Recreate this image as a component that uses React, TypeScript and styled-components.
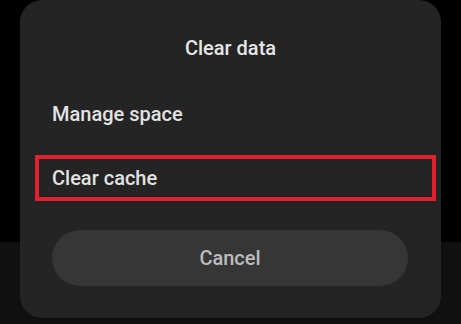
import React from "react";
import styled, { createGlobalStyle } from "styled-components";

const Global = createGlobalStyle`
  html, body { margin: 0; padding: 0; background: #000; }
  body { font-family: Roboto, "Noto Sans", "Liberation Sans", sans-serif; }
  * { box-sizing: border-box; }
`;

const Screen = styled.div`
  width: 461px;
  height: 324px;
  background: linear-gradient(to bottom, #000 0, #000 242px, #101010 242px, #101010 100%);
  padding-left: 20px;
  overflow: hidden;
`;

const Dialog = styled.div`
  width: 421px;
  height: 318px;
  background: #242424;
  border-radius: 22px;
  padding: 36px 32px 32px;
  display: flex;
  flex-direction: column;
`;

const Title = styled.div`
  font-size: 20px;
  line-height: 24px;
  font-weight: 500;
  color: #e6e6e6;
  text-align: center;
  margin-bottom: 31px;
`;

const Options = styled.div`
  display: flex;
  flex-direction: column;
  gap: 18px;
`;

const Option = styled.div<{ $highlight?: boolean }>`
  height: 46px;
  display: flex;
  align-items: center;
  font-size: 20px;
  line-height: 24px;
  font-weight: 500;
  color: #e2e2e2;
  ${(p) =>
    p.$highlight
      ? `
    border: 4px solid #e3202b;
    margin: 0 -27px 0 -17px;
    padding-left: 13px;
  `
      : ``}
`;

const CancelButton = styled.div`
  margin-top: 29px;
  height: 56px;
  width: 356px;
  border-radius: 28px;
  background: #363636;
  display: flex;
  align-items: center;
  justify-content: center;
  font-size: 20px;
  line-height: 24px;
  font-weight: 500;
  color: #bdbdbd;
`;

export default function App() {
  return (
    <>
      <Global />
      <Screen>
        <Dialog>
          <Title>Clear data</Title>
          <Options>
            <Option>Manage space</Option>
            <Option $highlight>Clear cache</Option>
          </Options>
          <CancelButton>Cancel</CancelButton>
        </Dialog>
      </Screen>
    </>
  );
}
